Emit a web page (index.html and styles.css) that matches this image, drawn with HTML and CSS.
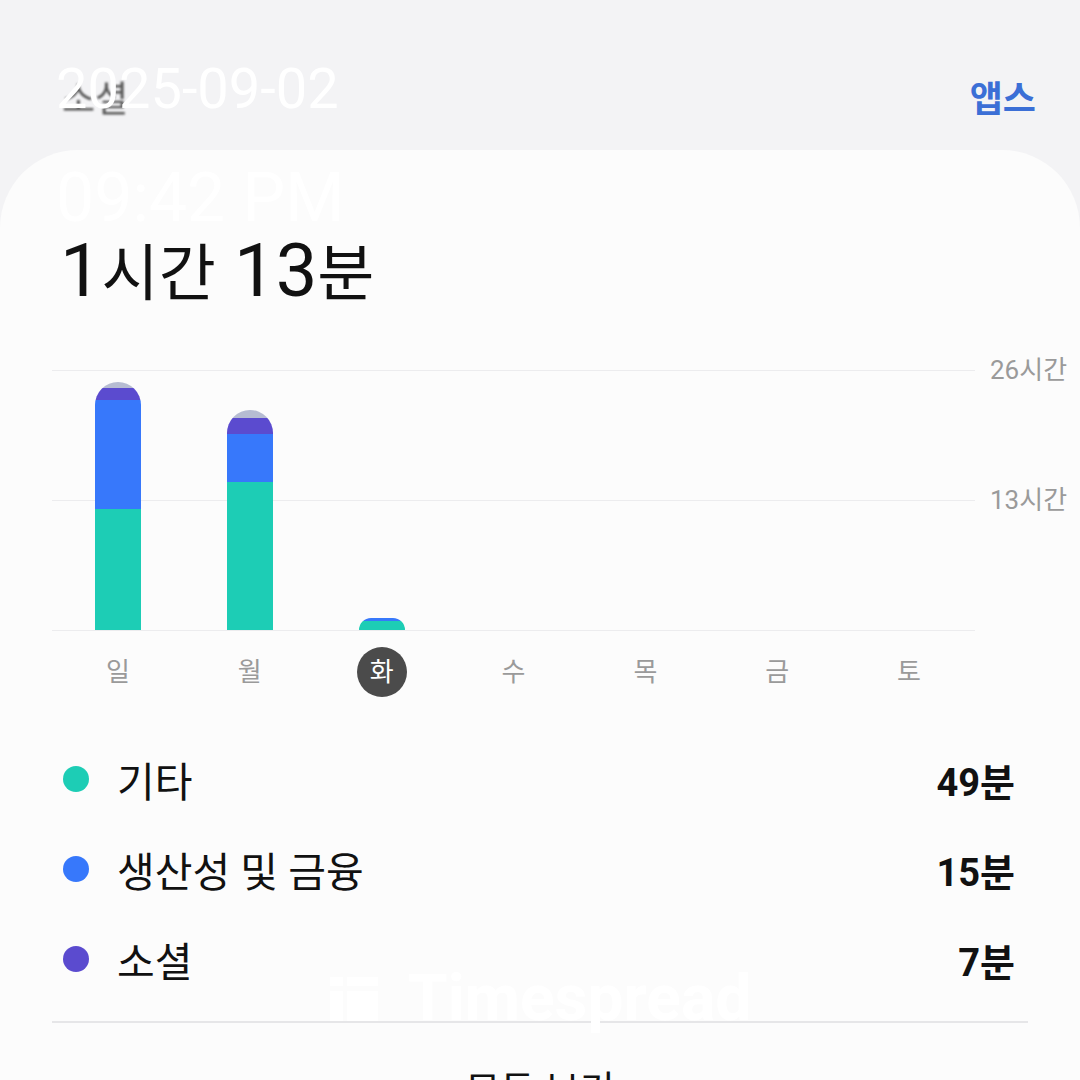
FILE: index.html
```html
<!DOCTYPE html>
<html lang="ko">
<head>
    <meta charset="UTF-8">
    <title>디지털 웰빙</title>

    <link rel="stylesheet" href="styles.css">
</head>
<body>
<div class="screen">
    <header class="top">
        <span class="tab">소셜</span>
        <span class="apps">앱스</span>
    </header>

    <main class="card">
        <div class="total">1<span class="unit">시간</span> 13<span class="unit">분</span></div>

        <div class="chart">
            <div class="plot">
                <div class="bar">
                    <div class="seg rest" style="height:6px"></div>
                    <div class="seg social" style="height:12px"></div>
                    <div class="seg work" style="height:109px"></div>
                    <div class="seg other" style="height:121px"></div>
                </div>
                <div class="bar">
                    <div class="seg rest" style="height:8px"></div>
                    <div class="seg social" style="height:16px"></div>
                    <div class="seg work" style="height:48px"></div>
                    <div class="seg other" style="height:148px"></div>
                </div>
                <div class="bar">
                    <div class="seg work" style="height:3px"></div>
                    <div class="seg other" style="height:9px"></div>
                </div>
                <div class="bar"></div>
                <div class="bar"></div>
                <div class="bar"></div>
                <div class="bar"></div>
            </div>
            <div class="axis">
                <span>26시간</span>
                <span>13시간</span>
            </div>
        </div>

        <div class="days">
            <span class="day">일</span>
            <span class="day">월</span>
            <span class="day today">화</span>
            <span class="day">수</span>
            <span class="day">목</span>
            <span class="day">금</span>
            <span class="day">토</span>
        </div>

        <ul class="legend">
            <li class="row"><i class="dot other"></i><span class="name">기타</span><b class="value">49분</b></li>
            <li class="row"><i class="dot work"></i><span class="name">생산성 및 금융</span><b class="value">15분</b></li>
            <li class="row"><i class="dot social"></i><span class="name">소셜</span><b class="value">7분</b></li>
        </ul>

        <div class="divider"></div>
        <div class="more">모두 보기</div>
    </main>

    <!-- overlays: capture stamp and brand mark -->
    <div class="stamp">
        <div class="date">2025-09-02</div>
        <div class="time">09:42 PM</div>
    </div>
    <div class="brand">
        <svg width="48" height="44" viewBox="0 0 48 44">
            <rect x="0" y="0" width="13" height="9" fill="#fff"/>
            <rect x="0" y="14" width="13" height="30" fill="#fff"/>
            <rect x="17" y="0" width="31" height="9" fill="#fff"/>
            <rect x="17" y="14" width="31" height="30" fill="#fff"/>
        </svg>
        <span>Timespread</span>
    </div>
</div>
</body>
</html>
```

FILE: styles.css
```css
* {
    box-sizing: border-box;
}

body {
    margin: 0;
    background: #f3f3f5;
    font-family: Roboto, "Noto Sans CJK KR", sans-serif;
    color: #111;
}

.screen {
    position: relative;
    width: 1080px;
    height: 1080px;
    overflow: hidden;
}

/*Шапка*/

.top {
    height: 150px;
    display: flex;
    justify-content: space-between;
    align-items: center;
    padding: 42px 44px 0 62px;
}

.tab {
    font-size: 36px;
    color: #555;
    filter: blur(0.8px);
}

.apps {
    font-size: 36px;
    font-weight: bold;
    color: #3b6fd6;
}

/*Карточка*/

.card {
    height: 930px;
    padding: 86px 52px 0;
    border-radius: 78px 78px 0 0;
    background: #fcfcfc;
}

.total {
    height: 70px;
    padding-left: 8px;
    font-size: 74px;
    line-height: 70px;
    white-space: nowrap;
}

.total .unit {
    font-size: 62px;
}

.chart {
    display: grid;
    grid-template-columns: 923px 1fr;
    column-gap: 15px;
    margin-top: 64px;
}

.plot {
    height: 261px;
    display: grid;
    grid-template-columns: repeat(7, 1fr);
    align-items: end;
    justify-items: center;
    border-top: 1px solid #ececee;
    border-bottom: 1px solid #ececee;
    background: linear-gradient(#ececee, #ececee) 0 129px / 100% 1px no-repeat;
}

.bar {
    width: 46px;
    display: flex;
    flex-direction: column;
    border-radius: 23px 23px 0 0;
    overflow: hidden;
}

.axis {
    margin-top: -13px;
    font-size: 26px;
    color: #9a9a9a;
}

.axis span {
    display: block;
    height: 130px;
    line-height: 26px;
    white-space: nowrap;
}

.days {
    width: 923px;
    display: grid;
    grid-template-columns: repeat(7, 1fr);
    margin-top: 16px;
}

.day {
    justify-self: center;
    width: 50px;
    height: 50px;
    line-height: 50px;
    text-align: center;
    font-size: 26px;
    color: #9a9a9a;
}

.today {
    border-radius: 50%;
    background: #4b4b4b;
    color: #fff;
}

.legend {
    list-style: none;
    margin: 37px 0 0;
    padding: 0;
}

.row {
    height: 90px;
    display: flex;
    align-items: center;
    padding: 0 13px 0 11px;
}

.dot {
    width: 26px;
    height: 26px;
    margin-right: 28px;
    border-radius: 50%;
}

.name {
    flex: 1;
    font-size: 41px;
}

.value {
    font-size: 38px;
}

.divider {
    height: 2px;
    margin-top: 17px;
    background: #e6e6e8;
}

.more {
    margin-top: 36px;
    text-align: center;
    font-size: 38px;
}

/*Цвета категорий*/

.other {
    background: #1dcdb5;
}

.work {
    background: #3778fb;
}

.social {
    background: #5b4bcf;
}

.rest {
    background: #b6bcd2;
}

/*Наложения*/

.stamp {
    position: absolute;
    left: 56px;
    top: 61px;
    color: #fff;
}

.stamp .date {
    font-size: 56px;
    line-height: 56px;
}

.stamp .time {
    margin-top: 47px;
    font-size: 68px;
    line-height: 68px;
}

.brand {
    position: absolute;
    left: 330px;
    top: 974px;
    display: flex;
    align-items: center;
    gap: 30px;
    font-size: 64px;
    line-height: 50px;
    font-weight: bold;
    color: #fff;
}
```
